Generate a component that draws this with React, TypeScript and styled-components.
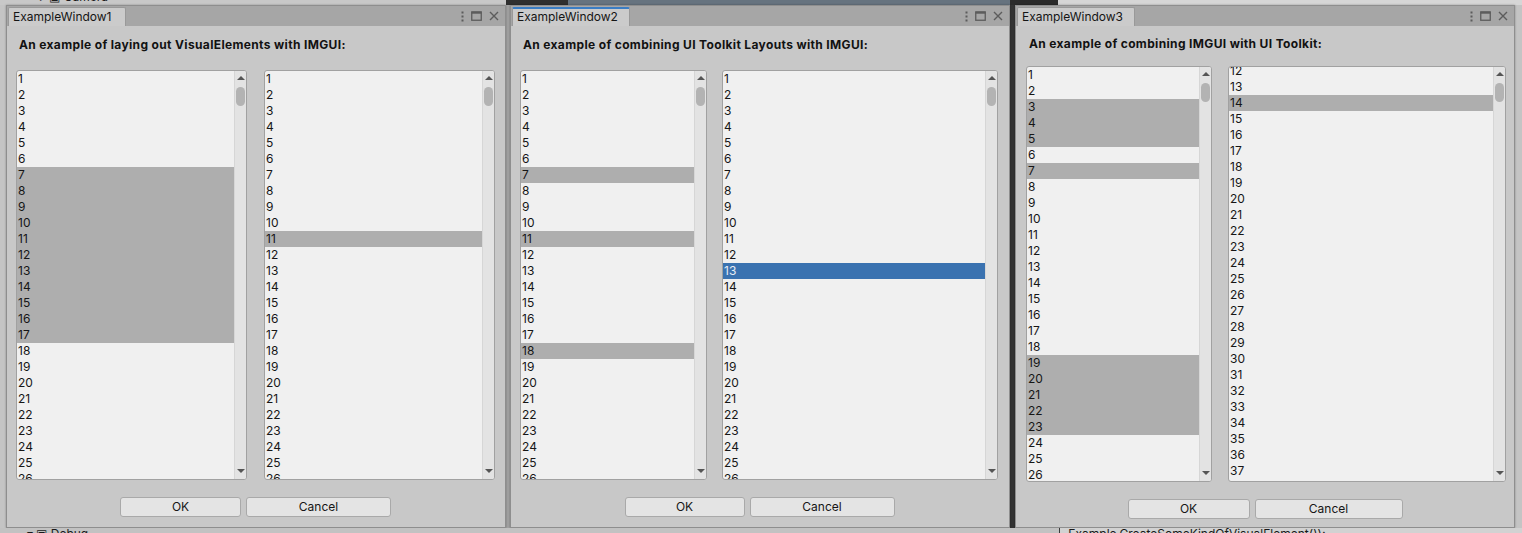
import React from 'react';
import styled, { createGlobalStyle } from 'styled-components';

const GlobalStyle = createGlobalStyle`
  html, body { margin: 0; padding: 0; }
  body {
    background: #c3c3c3;
    font-family: Inter, "Noto Sans", "Liberation Sans", sans-serif;
    width: 1522px;
    height: 533px;
    overflow: hidden;
  }
`;

const Desktop = styled.div`
  width: 1522px;
  height: 533px;
  display: flex;
  flex-direction: column;
  overflow: hidden;
  background: #c3c3c3;
`;

const TopStrip = styled.div`
  height: 5px;
  flex: none;
  overflow: hidden;
  display: flex;
  background: linear-gradient(
    to right,
    #c8c8c8 0 506px,
    #2f2f2f 506px 568px,
    #66737f 568px 1010px,
    #2b2b2b 1010px 1058px,
    #d6d6d6 1058px
  );
`;

const StripText = styled.span<{ $left: number; $top: number }>`
  margin-left: ${(p) => p.$left}px;
  margin-top: ${(p) => p.$top}px;
  font-size: 12px;
  line-height: 14px;
  color: #1a1a1a;
  white-space: nowrap;
  flex: none;
`;

const WindowsRow = styled.div`
  height: 523px;
  flex: none;
  display: flex;
  gap: 4px;
  padding-left: 6px;
  background: linear-gradient(
    to right,
    #c4c4c4 0 506px,
    #a2a2a2 506px 510px,
    #c4c4c4 510px 1010px,
    #333333 1010px 1015px,
    #c4c4c4 1015px
  );
`;

const BottomStrip = styled.div`
  height: 5px;
  flex: none;
  overflow: hidden;
  display: flex;
  background: linear-gradient(to right, #c2c2c2 0 1059px, #3a3a3a 1059px 1060px, #d2d2d2 1060px);
`;

const Frame = styled.div<{ $shift: number }>`
  width: 500px;
  height: 523px;
  flex: none;
  box-sizing: border-box;
  display: flex;
  flex-direction: column;
  border: 1px solid #8e8e8e;
  background: #c8c8c8;
  margin-left: ${(p) => p.$shift}px;
  box-shadow: 0 0 2px rgba(0, 0, 0, 0.3);
`;

const TabBar = styled.div`
  height: 20px;
  flex: none;
  display: flex;
  align-items: flex-end;
  background: #a6a6a6;
  padding-left: 1px;
`;

const Tab = styled.div<{ $active: boolean }>`
  width: 118px;
  height: 19px;
  box-sizing: border-box;
  background: #cbcbcb;
  border: 1px solid #999999;
  border-bottom: none;
  border-top: ${(p) => (p.$active ? '2px solid #3a7dc4' : '1px solid #999999')};
  border-radius: 2px 2px 0 0;
  font-size: 12px;
  line-height: ${(p) => (p.$active ? '16px' : '17px')};
  padding-left: 4px;
  color: #151515;
`;

const TitleIcons = styled.div`
  margin-left: auto;
  align-self: center;
  display: flex;
  align-items: center;
  gap: 7px;
  padding-right: 6px;
  color: #5c5c5c;
`;

const Body = styled.div<{ $pad: number; $top: number }>`
  flex: 1;
  display: flex;
  flex-direction: column;
  padding: ${(p) => p.$top}px 0 0 ${(p) => p.$pad}px;
`;

const Heading = styled.div`
  font-size: 12px;
  font-weight: 700;
  line-height: 16px;
  letter-spacing: 0.35px;
  color: #121212;
  padding-left: 3px;
  margin-top: 1px;
`;

const ListsRow = styled.div<{ $gap: number; $top: number }>`
  display: flex;
  gap: ${(p) => p.$gap}px;
  margin-top: ${(p) => p.$top}px;
`;

const ListBox = styled.div<{ $w: number; $h: number }>`
  width: ${(p) => p.$w}px;
  height: ${(p) => p.$h}px;
  box-sizing: border-box;
  border: 1px solid #a1a1a1;
  border-radius: 3px;
  background: #f0f0f0;
  display: flex;
  overflow: hidden;
`;

const Rows = styled.div`
  flex: 1;
  overflow: hidden;
`;

const RowsInner = styled.div<{ $offset: number }>`
  margin-top: ${(p) => -p.$offset}px;
`;

const Row = styled.div<{ $sel: 'none' | 'gray' | 'blue' }>`
  height: 16px;
  line-height: 16px;
  font-size: 12px;
  padding-left: 1px;
  white-space: nowrap;
  color: ${(p) => (p.$sel === 'blue' ? '#e6edf5' : '#161616')};
  background: ${(p) => (p.$sel === 'gray' ? '#aeaeae' : p.$sel === 'blue' ? '#3a72b0' : 'transparent')};
`;

const Scrollbar = styled.div`
  width: 12px;
  flex: none;
  display: flex;
  flex-direction: column;
  align-items: center;
  background: #e3e3e3;
  border-left: 1px solid #d6d6d6;
  padding: 5px 0 6px;
  box-sizing: border-box;
`;

const Arrow = styled.div<{ $down?: boolean }>`
  width: 0;
  height: 0;
  border-left: 4px solid transparent;
  border-right: 4px solid transparent;
  ${(p) => (p.$down ? 'border-top: 4px solid #555;' : 'border-bottom: 4px solid #555;')}
`;

const Thumb = styled.div`
  width: 9px;
  height: 19px;
  margin-top: 7px;
  border-radius: 5px;
  background: #b3b3b3;
`;

const Spacer = styled.div`
  flex: 1;
`;

const ButtonRow = styled.div`
  display: flex;
  justify-content: center;
  gap: 5px;
  margin-top: 17px;
  padding-right: 10px;
`;

const Button = styled.button<{ $w: number }>`
  width: ${(p) => p.$w}px;
  height: 20px;
  padding: 0;
  box-sizing: border-box;
  border: 1px solid #a9a9a9;
  border-radius: 3px;
  background: #e4e4e4;
  font-family: Inter, "Noto Sans", sans-serif;
  font-size: 12px;
  color: #161616;
  line-height: 18px;
`;

const Kebab = () => (
  <svg width="3" height="11" viewBox="0 0 3 11">
    <rect x="0.5" y="0.5" width="2" height="2" fill="currentColor" />
    <rect x="0.5" y="4.5" width="2" height="2" fill="currentColor" />
    <rect x="0.5" y="8.5" width="2" height="2" fill="currentColor" />
  </svg>
);

const Maximize = () => (
  <svg width="11" height="10" viewBox="0 0 11 10">
    <rect x="0.75" y="1" width="9.5" height="8.25" fill="none" stroke="currentColor" strokeWidth="1.3" />
    <rect x="0.5" y="0.5" width="10" height="2.2" fill="currentColor" />
  </svg>
);

const Close = () => (
  <svg width="10" height="10" viewBox="0 0 10 10">
    <path d="M1 1 L9 9 M9 1 L1 9" stroke="currentColor" strokeWidth="1.4" />
  </svg>
);

type ListSpec = {
  width: number;
  first: number;
  last: number;
  gray?: number[];
  blue?: number[];
  offset?: number;
};

const List = ({ spec, height }: { spec: ListSpec; height: number }) => {
  const rows = Array.from({ length: spec.last - spec.first + 1 }, (_, i) => spec.first + i);
  return (
    <ListBox $w={spec.width} $h={height}>
      <Rows>
        <RowsInner $offset={spec.offset ?? 0}>
          {rows.map((n) => (
            <Row
              key={n}
              $sel={spec.blue?.includes(n) ? 'blue' : spec.gray?.includes(n) ? 'gray' : 'none'}
            >
              {n}
            </Row>
          ))}
        </RowsInner>
      </Rows>
      <Scrollbar>
        <Arrow />
        <Thumb />
        <Spacer />
        <Arrow $down />
      </Scrollbar>
    </ListBox>
  );
};

type WindowSpec = {
  title: string;
  active: boolean;
  shift: number;
  heading: string;
  pad: number;
  top: number;
  listTop: number;
  listHeight: number;
  listGap: number;
  lists: [ListSpec, ListSpec];
  okW: number;
  cancelW: number;
};

const EditorWindow = ({ w }: { w: WindowSpec }) => (
  <Frame $shift={w.shift}>
    <TabBar>
      <Tab $active={w.active}>{w.title}</Tab>
      <TitleIcons>
        <Kebab />
        <Maximize />
        <Close />
      </TitleIcons>
    </TabBar>
    <Body $pad={w.pad} $top={w.top}>
      <Heading>{w.heading}</Heading>
      <ListsRow $gap={w.listGap} $top={w.listTop}>
        <List spec={w.lists[0]} height={w.listHeight} />
        <List spec={w.lists[1]} height={w.listHeight} />
      </ListsRow>
      <ButtonRow>
        <Button $w={w.okW}>OK</Button>
        <Button $w={w.cancelW}>Cancel</Button>
      </ButtonRow>
    </Body>
  </Frame>
);

const range = (a: number, b: number) => Array.from({ length: b - a + 1 }, (_, i) => a + i);

const windows: WindowSpec[] = [
  {
    title: 'ExampleWindow1',
    active: false,
    shift: 0,
    heading: 'An example of laying out VisualElements with IMGUI:',
    pad: 9,
    top: 10,
    listTop: 17,
    listHeight: 410,
    listGap: 17,
    lists: [
      { width: 231, first: 1, last: 26, gray: range(7, 17) },
      { width: 231, first: 1, last: 26, gray: [11] },
    ],
    okW: 121,
    cancelW: 145,
  },
  {
    title: 'ExampleWindow2',
    active: true,
    shift: 0,
    heading: 'An example of combining UI Toolkit Layouts with IMGUI:',
    pad: 9,
    top: 10,
    listTop: 17,
    listHeight: 410,
    listGap: 15,
    lists: [
      { width: 187, first: 1, last: 26, gray: [7, 11, 18] },
      { width: 276, first: 1, last: 26, blue: [13] },
    ],
    okW: 120,
    cancelW: 145,
  },
  {
    title: 'ExampleWindow3',
    active: false,
    shift: 1,
    heading: 'An example of combining IMGUI with UI Toolkit:',
    pad: 10,
    top: 9,
    listTop: 14,
    listHeight: 416,
    listGap: 16,
    lists: [
      { width: 186, first: 1, last: 26, gray: [3, 4, 5, 7, 19, 20, 21, 22, 23] },
      { width: 278, first: 12, last: 38, gray: [14], offset: 4 },
    ],
    okW: 122,
    cancelW: 148,
  },
];

export default function App() {
  return (
    <>
      <GlobalStyle />
      <Desktop>
        <TopStrip>
          <StripText $left={40} $top={-10}>▸ ▣ Camera</StripText>
        </TopStrip>
        <WindowsRow>
          {windows.map((w) => (
            <EditorWindow key={w.title} w={w} />
          ))}
        </WindowsRow>
        <BottomStrip>
          <StripText $left={27} $top={-1}>▾ ▣ Debug ▪</StripText>
          <StripText $left={970} $top={-1}>Example.CreateSomeKindOfVisualElement());</StripText>
        </BottomStrip>
      </Desktop>
    </>
  );
}
